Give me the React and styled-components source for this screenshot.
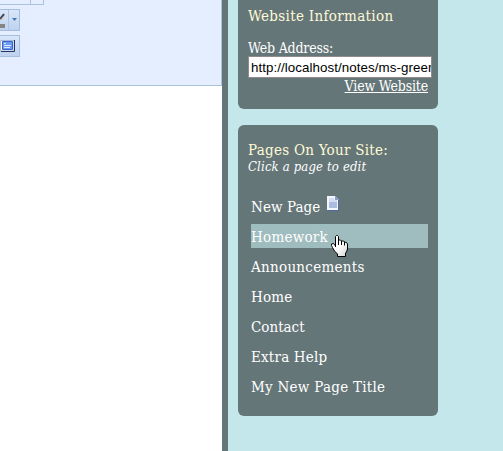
import React from "react";
import styled, { createGlobalStyle } from "styled-components";

const GlobalStyle = createGlobalStyle`
  * { box-sizing: border-box; }
  html, body { margin: 0; height: 100%; overflow: hidden; }
`;

const Page = styled.div`
  display: flex;
  width: 503px;
  height: 451px;
  overflow: hidden;
  background: #c3e7ea;
  color: #fff;
  font-family: "DejaVu Serif Condensed", "DejaVu Serif", serif;
  font-stretch: condensed;
`;

const Editor = styled.main`
  width: 228px;
  flex: none;
  background: #fff;
  border-right: 6px solid #657678;
`;

const Toolbar = styled.div`
  height: 86px;
  background: #e5eeff;
  border-right: 1px solid #a9c2de;
  border-bottom: 1px solid #a9c2de;
`;

const ToolbarTop = styled.div`
  display: flex;
  width: 44px;
  height: 5px;
  border-right: 1px solid #a9c2e4;
  border-bottom: 1px solid #a9c2e4;
  margin-bottom: 4px;
`;

const TopSegment = styled.div`
  width: 31px;
  border-right: 1px solid #a9c2e4;
`;

const ToolButton = styled.div`
  display: flex;
  width: 20px;
  height: 22px;
  margin-bottom: 4px;
  background: linear-gradient(#d9e6f8, #bed2ef);
  border: 1px solid #a5bddf;
  border-left: 0;
  svg { display: block; flex: none; }
`;

const Sidebar = styled.aside`
  display: flex;
  flex-direction: column;
  gap: 16px;
  width: 200px;
  margin-left: 10px;
`;

const Panel = styled.section`
  height: ${({ $height }) => $height}px;
  padding: ${({ $top }) => $top}px 10px 0;
  flex: none;
  background: #657678;
  border-radius: ${({ $first }) => ($first ? "0 0 6px 6px" : "6px")};
`;

const Line = styled.div`
  height: ${({ $height = 16 }) => $height}px;
  line-height: ${({ $height = 16 }) => $height}px;
  font-size: 14px;
  letter-spacing: ${({ $spacing = 0 }) => $spacing}px;
  white-space: nowrap;
`;

const Heading = styled(Line)`
  font-size: 15px;
  color: #fffbd6;
`;

const Hint = styled(Line)`
  line-height: 18px;
  font-size: 13px;
  font-style: italic;
`;

const AddressLabel = styled(Line)`
  margin-top: 16px;
`;

const Address = styled.div`
  width: 184px;
  height: 22px;
  padding-left: 2px;
  overflow: hidden;
  background: #fff;
  border: 1px solid #918b8b;
  color: #000;
  font: 13.33px/21px "Liberation Sans", Arial, sans-serif;
  letter-spacing: 0.07px;
  white-space: nowrap;
`;

const ViewLink = styled(Line)`
  width: 180px;
  text-align: right;
  text-decoration: underline;
  text-decoration-thickness: 1px;
  text-underline-offset: 1px;
`;

const PageList = styled.div`
  display: flex;
  flex-direction: column;
  gap: 6px;
  margin: 20px 0 0 3px;
  width: 177px;
`;

const PageRow = styled(Line)`
  position: relative;
  display: flex;
  line-height: 26px;
  font-size: 15px;
  background: ${({ $active }) => ($active ? "#9fbcbe" : "transparent")};
`;

const PageIcon = styled.svg`
  margin: 2px 0 0 7px;
`;

const Cursor = styled.svg`
  position: absolute;
  left: 80px;
  top: 11px;
  z-index: 1;
`;

const pages = [
  { name: "New Page", spacing: 0.07, icon: true },
  { name: "Homework", spacing: 0.25, active: true },
  { name: "Announcements", spacing: 0.28 },
  { name: "Home", spacing: 0.2 },
  { name: "Contact", spacing: 0 },
  { name: "Extra Help", spacing: 0.2 },
  { name: "My New Page Title", spacing: 0.27 },
];

function DocumentIcon() {
  return (
    <PageIcon width="13" height="15" viewBox="0 0 13 15">
      <path d="M0 0H8L12 4V14H0Z" fill="#f1f6ff" />
      <path d="M11.5 4V14.5H1" fill="none" stroke="#52699c" />
      <path d="M8 0V4H12Z" fill="#819bd0" />
      <path d="M2 3H7M2 5H10" stroke="#b6c6e5" />
      <path d="M2 6H10V12H2Z" fill="#acbbe0" />
    </PageIcon>
  );
}

function HandCursor() {
  return (
    <Cursor width="18" height="22" viewBox="0 0 18 22">
      <defs>
        <linearGradient id="hand" x1="0" y1="0" x2="1" y2="1">
          <stop offset=".5" stopColor="#fff" />
          <stop offset="1" stopColor="#d2d2d2" />
        </linearGradient>
      </defs>
      <path
        d="M4.5 11V1.5L5.5.5H6.5L7.5 1.5V5L9.5 5L10.5 6L12.5 6L13.5 7L15.5 7.5L16.5 9V14L15.5 17L14.5 18V21.5H6.5V19L3.5 16L1.5 12.5L.5 10.5V9L2.5 8.5L4.5 11Z"
        fill="url(#hand)"
        stroke="#000"
      />
      <path d="M7.5 5V10M10.5 6V10M13.5 7V10.5M4.5 9V12" stroke="#000" />
    </Cursor>
  );
}

export default function App() {
  return (
    <Page>
      <GlobalStyle />
      <Editor>
        <Toolbar>
          <ToolbarTop><TopSegment /></ToolbarTop>
          <ToolButton>
            <svg width="19" height="20" viewBox="0 0 19 20">
              <path d="M0 9L4 4" stroke="#39435c" strokeWidth="2" />
              <path d="M1 10L5 5" stroke="#d9ac83" />
              <path d="M0 14H5V18H0Z" fill="#858585" />
              <path d="M8.5 0V20" stroke="#adc5e7" />
              <path d="M12 8H17L14.5 11Z" fill="#4677b8" />
            </svg>
          </ToolButton>
          <ToolButton>
            <svg width="19" height="20" viewBox="0 0 19 20">
              <path d="M.5 4.5H14V15H.5Z" fill="#fff" stroke="#a3b8d8" />
              <path d="M14.5 4V15.5H1" fill="none" stroke="#21355f" />
              <path d="M2.5 5.5H12.5V13.5H2.5Z" fill="#6b9af0" stroke="#3a66cc" />
              <path d="M4 7.5H6M4 9.5H11M4 11.5H10" stroke="#d9e9ff" />
            </svg>
          </ToolButton>
        </Toolbar>
      </Editor>
      <Sidebar>
        <Panel $height={109} $top={8} $first>
          <Heading $spacing={0.33}>Website Information</Heading>
          <AddressLabel $spacing={-0.17}>Web Address:</AddressLabel>
          <Address>http://localhost/notes/ms-green</Address>
          <ViewLink $spacing={-0.17}>View Website</ViewLink>
        </Panel>
        <Panel $height={291} $top={17}>
          <Heading $spacing={0.27}>Pages On Your Site:</Heading>
          <Hint $spacing={0.15}>Click a page to edit</Hint>
          <PageList>
            {pages.map((p) => (
              <PageRow key={p.name} $height={24} $spacing={p.spacing} $active={p.active}>
                {p.name}
                {p.icon && <DocumentIcon />}
                {p.active && <HandCursor />}
              </PageRow>
            ))}
          </PageList>
        </Panel>
      </Sidebar>
    </Page>
  );
}
